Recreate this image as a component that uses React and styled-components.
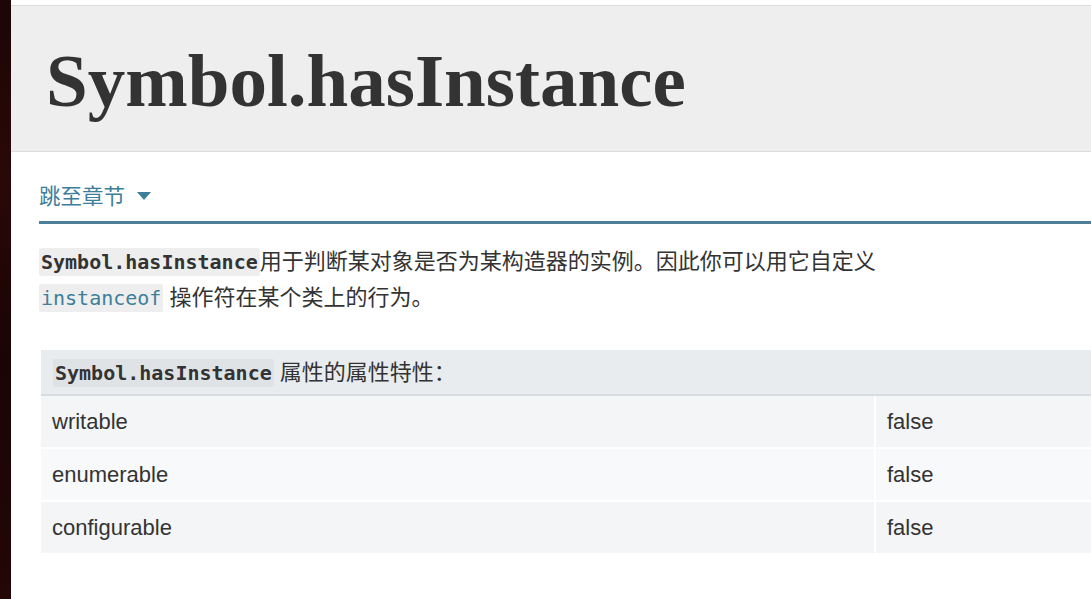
import React from "react";
import styled, { createGlobalStyle } from "styled-components";

const Global = createGlobalStyle`
  html, body { margin: 0; padding: 0; background: #fff; overflow: hidden; }
  body { width: 1091px; height: 599px; }
`;

const Screen = styled.div`
  display: flex;
  width: 1091px;
  height: 599px;
  overflow: hidden;
`;

const DesktopStrip = styled.div`
  width: 11px;
  flex: none;
  background: linear-gradient(180deg, #1d0606 0%, #2a0808 30%, #1a0404 60%, #240707 100%);
`;

const Page = styled.div`
  flex: 1;
  min-width: 0;
  display: flex;
  flex-direction: column;
  padding-top: 5px;
  background: #fff;
`;

const Header = styled.header`
  height: 147px;
  box-sizing: border-box;
  background: #eeeeee;
  border-top: 1px solid #dcdcdc;
  border-bottom: 1px solid #dcdcdc;
  display: flex;
  align-items: center;
  padding: 4px 0 0 35px;
`;

const Title = styled.h1`
  margin: 0;
  font-family: "Liberation Serif", serif;
  font-weight: 700;
  font-size: 75px;
  line-height: 1;
  color: #333;
`;

const Content = styled.main`
  padding: 26px 0 0 28px;
  font-family: "Liberation Sans", "Noto Sans CJK SC", sans-serif;
  color: #333;
`;

const JumpRow = styled.div`
  display: flex;
  align-items: center;
  gap: 12px;
  height: 33px;
  font-family: "Noto Sans CJK SC", sans-serif;
  font-size: 21.5px;
  color: #3d7e9a;
`;

const Caret = styled.span`
  width: 0;
  height: 0;
  border-left: 7px solid transparent;
  border-right: 7px solid transparent;
  border-top: 8px solid #3d7e9a;
  margin-top: 2px;
`;

const Rule = styled.div`
  height: 3px;
  background: #4d7e9a;
  margin-top: 10px;
`;

const Para = styled.p`
  margin: 20px 0 0;
  font-family: "Liberation Sans", "Noto Sans CJK SC", sans-serif;
  font-size: 22px;
  line-height: 36px;
  color: #333;
  max-width: 850px;
`;

const Code = styled.code`
  font-family: "DejaVu Sans Mono", monospace;
  font-size: 20px;
  font-weight: ${(p) => (p.$bold ? 700 : 400)};
  color: ${(p) => (p.$link ? "#3d7e9a" : "#333")};
  background: ${(p) => p.$bg || "#eeeeee"};
  padding: 2px 2px;
  border-radius: 2px;
`;

const Table = styled.table`
  margin: 34px 0 0 2px;
  width: calc(100% - 2px);
  border-collapse: collapse;
  font-family: "Liberation Sans", sans-serif;
  font-size: 22px;
  color: #333;
`;

const HeadCell = styled.th`
  background: #e9ecef;
  border-bottom: 2px solid #d9dde1;
  text-align: left;
  font-weight: 400;
  height: 39px;
  padding: 0 0 5px 12px;
  font-family: "Liberation Sans", "Noto Sans CJK SC", sans-serif;
`;

const Row = styled.tr`
  background: ${(p) => (p.$alt ? "#f8f9fa" : "#f3f5f7")};
  border-top: ${(p) => (p.$first ? "0" : "2px solid #fff")};
`;

const Cell = styled.td`
  height: 51px;
  padding: 0 0 0 11px;
  border-left: ${(p) => (p.$second ? "2px solid #fff" : "0")};
  width: ${(p) => (p.$second ? "auto" : "822px")};
`;

const rows = [
  ["writable", "false"],
  ["enumerable", "false"],
  ["configurable", "false"],
];

export default function App() {
  return (
    <>
      <Global />
      <Screen>
        <DesktopStrip />
        <Page>
          <Header>
            <Title>Symbol.hasInstance</Title>
          </Header>
          <Content>
            <JumpRow>
              <span>跳至章节</span>
              <Caret />
            </JumpRow>
            <Rule />
            <Para>
              <Code $bold>Symbol.hasInstance</Code>用于判断某对象是否为某构造器的实例。因此你可以用它自定义{" "}
              <Code $link>instanceof</Code> 操作符在某个类上的行为。
            </Para>
            <Table>
              <thead>
                <tr>
                  <HeadCell colSpan={2}>
                    <Code $bold $bg="#e0e3e6">Symbol.hasInstance</Code> 属性的属性特性：
                  </HeadCell>
                </tr>
              </thead>
              <tbody>
                {rows.map(([k, v], i) => (
                  <Row key={k} $alt={i % 2 === 1} $first={i === 0}>
                    <Cell>{k}</Cell>
                    <Cell $second>{v}</Cell>
                  </Row>
                ))}
              </tbody>
            </Table>
          </Content>
        </Page>
      </Screen>
    </>
  );
}
